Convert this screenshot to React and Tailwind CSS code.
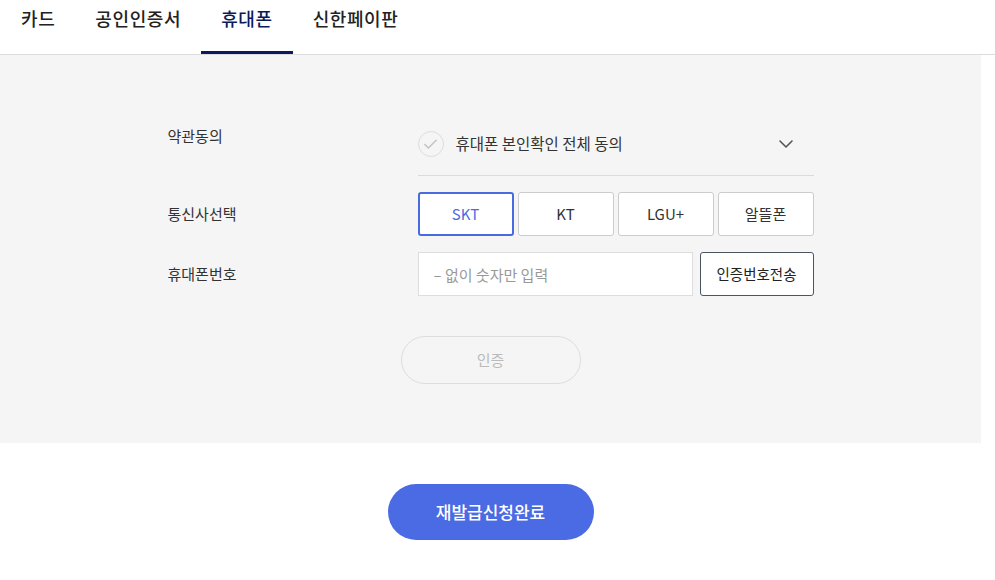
import { Check, ChevronDown } from "lucide-react";

const font = { fontFamily: '"Noto Sans CJK KR", "Noto Sans", sans-serif' };

export default function App() {
  const tabs = ["카드", "공인인증서", "휴대폰", "신한페이판"];
  const carriers = ["SKT", "KT", "LGU+", "알뜰폰"];

  return (
    <div className="w-[995px] bg-white text-[#222]" style={font}>
      {/* tabs */}
      <div className="flex border-b border-[#ddd] pl-px">
        {tabs.map((t, i) => (
          <div
            key={t}
            className={
              i === 2
                ? "h-[54px] px-5 pt-[5px] text-[18px] tracking-[0.6px] font-medium text-[#0b1a5c] border-b-[3px] border-[#0b1a5c] -mb-px"
                : "h-[54px] px-5 pt-[5px] text-[18px] tracking-[0.6px] font-medium text-[#222]"
            }
          >
            {t}
          </div>
        ))}
      </div>

      {/* form panel */}
      <div className="w-[981px] bg-[#f5f5f5] pt-[69px] pb-[59px]">
        <div className="w-[646px] mx-auto flex flex-col gap-4">
          <div className="flex">
            <div className="w-[250px] text-[15px] leading-6 text-[#333]">약관동의</div>
            <div className="w-[396px]">
              <div className="h-[40px] flex items-center">
                <span className="w-[26px] h-[26px] rounded-full border border-[#ddd] flex items-center justify-center">
                  <Check size={17} strokeWidth={2.2} className="text-[#c4c4c4]" />
                </span>
                <span className="ml-3 text-[15.5px] text-[#333]">휴대폰 본인확인 전체 동의</span>
                <ChevronDown size={24} strokeWidth={1.6} className="ml-auto mr-[16px] text-[#555]" />
              </div>
              <div className="mt-[11px] h-px bg-[#dcdcdc]" />
            </div>
          </div>

          <div className="flex items-center">
            <div className="w-[250px] text-[15px] text-[#333]">통신사선택</div>
            <div className="w-[396px] grid grid-cols-4 gap-1">
              {carriers.map((c, i) => (
                <button
                  key={c}
                  className={
                    i === 0
                      ? "h-[44px] bg-white rounded-[3px] border-2 border-[#4a6be0] text-[15px] text-[#4a6be0]"
                      : "h-[44px] bg-white rounded-[3px] border border-[#ccc] text-[15px] text-[#333]"
                  }
                >
                  {c}
                </button>
              ))}
            </div>
          </div>

          <div className="flex items-center">
            <div className="w-[250px] text-[15px] text-[#333]">휴대폰번호</div>
            <div className="w-[396px] flex gap-[7px]">
              <input
                className="w-[275px] h-[44px] bg-white border border-[#ddd] px-[15px] text-[15px] outline-none placeholder:text-[#999]"
                placeholder="– 없이 숫자만 입력"
              />
              <button className="flex-1 h-[44px] bg-white rounded-[3px] border border-[#4a5563] text-[14.5px] text-[#222]">
                인증번호전송
              </button>
            </div>
          </div>
        </div>

        <div className="flex justify-center mt-10">
          <button className="w-[180px] h-[48px] rounded-full border border-[#ddd] text-[15px] text-[#bbb]">
            인증
          </button>
        </div>
      </div>

      <div className="w-[981px] flex justify-center pt-[41px] pb-[40px]">
        <button className="w-[206px] h-[56px] rounded-full bg-[#4a6be3] text-white text-[17px] font-medium">
          재발급신청완료
        </button>
      </div>
    </div>
  );
}
